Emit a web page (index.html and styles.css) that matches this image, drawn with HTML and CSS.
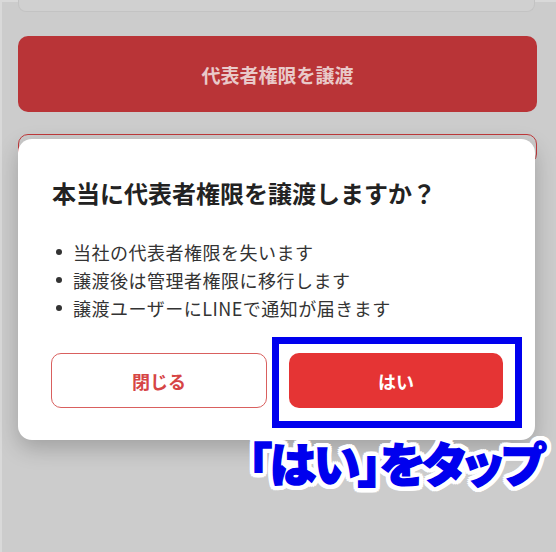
FILE: index.html
```html
<!DOCTYPE html>
<html lang="ja">
<head>
<meta charset="utf-8">
<title>代表者権限を譲渡</title>
<link rel="stylesheet" href="styles.css">
</head>
<body>
<div class="screen">
  <div class="top-card"></div>
  <div class="transfer-btn">代表者権限を譲渡</div>
  <div class="outline-card"></div>

  <div class="dialog">
    <h2 class="dialog-title">本当に代表者権限を譲渡しますか？</h2>
    <ul class="notes">
      <li>当社の代表者権限を失います</li>
      <li>譲渡後は管理者権限に移行します</li>
      <li>譲渡ユーザーにLINEで通知が届きます</li>
    </ul>
    <div class="actions">
      <div class="btn btn-close">閉じる</div>
      <div class="btn btn-yes">はい</div>
    </div>
  </div>

  <div class="highlight"></div>
  <div class="caption">「はい」をタップ</div>
</div>
</body>
</html>
```

FILE: styles.css
```css
* { box-sizing: border-box; }
html, body { margin: 0; padding: 0; }
body {
  font-family: "Noto Sans CJK JP", "Noto Sans", sans-serif;
  background: #cdcdcd;
}
.screen {
  position: relative;
  width: 556px;
  height: 552px;
  overflow: hidden;
  background: #cccccc;
  box-shadow: inset 2px 2px 0 #d9d9d9;
  padding: 0 19px 0 18px;
  display: flex;
  flex-direction: column;
}
.top-card {
  height: 12px;
  background: #d0d0d0;
  border: 1px solid #c3c3c3;
  border-top: none;
  border-radius: 0 0 8px 8px;
  margin-right: 2px;
}
.transfer-btn {
  margin-top: 24px;
  height: 76px;
  background: #b93437;
  border-radius: 10px;
  display: flex;
  align-items: center;
  justify-content: center;
  color: #e9c9c9;
  font-size: 19px;
  font-weight: 700;
}
.outline-card {
  margin-top: 22px;
  height: 30px;
  border: 1px solid #c0393b;
  border-radius: 10px;
  background: #cccccc;
}
.dialog {
  position: absolute;
  left: 18px;
  top: 139px;
  width: 517px;
  height: 301px;
  background: #ffffff;
  border-radius: 14px;
  box-shadow: 0 8px 22px rgba(0, 0, 0, 0.22);
  padding: 37px 32px 32px 33px;
  display: flex;
  flex-direction: column;
}
.dialog-title {
  margin: 0 0 0 1px;
  font-size: 24px;
  line-height: 34px;
  font-weight: 700;
  color: #222222;
}
.notes {
  list-style: none;
  margin: 28px 0 0 0;
  padding: 0;
}
.notes li {
  position: relative;
  padding-left: 22px;
  font-size: 18px;
  line-height: 28px;
  color: #333333;
  letter-spacing: 0.5px;
}
.notes li::before {
  content: "";
  position: absolute;
  left: 5px;
  top: 11px;
  width: 6px;
  height: 6px;
  border-radius: 50%;
  background: #333333;
}
.actions {
  margin-top: auto;
  display: flex;
  gap: 22px;
}
.btn {
  flex: 1;
  height: 55px;
  border-radius: 10px;
  display: flex;
  align-items: center;
  justify-content: center;
  font-size: 18px;
  font-weight: 700;
}
.btn-close {
  border: 1px solid #d9605e;
  color: #d64545;
  background: #ffffff;
}
.btn-yes {
  background: #e53434;
  color: #ffffff;
}
.highlight {
  position: absolute;
  left: 272px;
  top: 337px;
  width: 250px;
  height: 91px;
  border: 7px solid #0000ee;
}
.caption {
  position: absolute;
  left: 248px;
  top: 430px;
  font-size: 47px;
  line-height: 64px;
  font-weight: 900;
  font-feature-settings: "palt" 1;
  letter-spacing: -2px;
  color: #0000ee;
  -webkit-text-stroke: 1.5px #0000ee;
  text-shadow:
    5px 0 0 #fff, -5px 0 0 #fff, 0 5px 0 #fff, 0 -5px 0 #fff,
    4px 4px 0 #fff, -4px 4px 0 #fff, 4px -4px 0 #fff, -4px -4px 0 #fff,
    5px 2px 0 #fff, -5px 2px 0 #fff, 5px -2px 0 #fff, -5px -2px 0 #fff,
    2px 5px 0 #fff, -2px 5px 0 #fff, 2px -5px 0 #fff, -2px -5px 0 #fff;
  white-space: nowrap;
}
```
